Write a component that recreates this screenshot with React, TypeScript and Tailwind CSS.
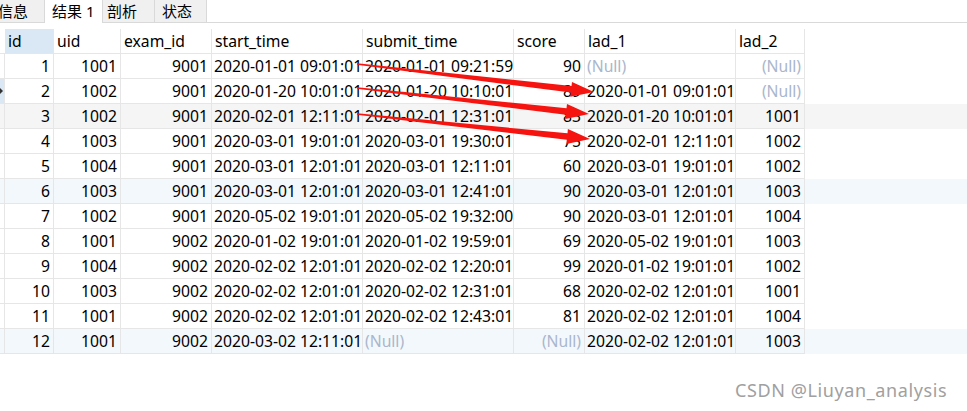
import React from "react";

const cols = [
  { name: "id", w: "w-[49px]" },
  { name: "uid", w: "w-[67px]" },
  { name: "exam_id", w: "w-[91px]" },
  { name: "start_time", w: "w-[151px]" },
  { name: "submit_time", w: "w-[151px]" },
  { name: "score", w: "w-[71px]" },
  { name: "lad_1", w: "w-[151px]" },
  { name: "lad_2", w: "w-[69px]" },
];

const raw: (string | null)[][] = [
  ["1", "1001", "9001", "2020-01-01 09:01:01", "2020-01-01 09:21:59", "90", null, null],
  ["2", "1002", "9001", "2020-01-20 10:01:01", "2020-01-20 10:10:01", "89", "2020-01-01 09:01:01", null],
  ["3", "1002", "9001", "2020-02-01 12:11:01", "2020-02-01 12:31:01", "83", "2020-01-20 10:01:01", "1001"],
  ["4", "1003", "9001", "2020-03-01 19:01:01", "2020-03-01 19:30:01", "75", "2020-02-01 12:11:01", "1002"],
  ["5", "1004", "9001", "2020-03-01 12:01:01", "2020-03-01 12:11:01", "60", "2020-03-01 19:01:01", "1002"],
  ["6", "1003", "9001", "2020-03-01 12:01:01", "2020-03-01 12:41:01", "90", "2020-03-01 12:01:01", "1003"],
  ["7", "1002", "9001", "2020-05-02 19:01:01", "2020-05-02 19:32:00", "90", "2020-03-01 12:01:01", "1004"],
  ["8", "1001", "9002", "2020-01-02 19:01:01", "2020-01-02 19:59:01", "69", "2020-05-02 19:01:01", "1003"],
  ["9", "1004", "9002", "2020-02-02 12:01:01", "2020-02-02 12:20:01", "99", "2020-01-02 19:01:01", "1002"],
  ["10", "1003", "9002", "2020-02-02 12:01:01", "2020-02-02 12:31:01", "68", "2020-02-02 12:01:01", "1001"],
  ["11", "1001", "9002", "2020-02-02 12:01:01", "2020-02-02 12:43:01", "81", "2020-02-02 12:01:01", "1004"],
  ["12", "1001", "9002", "2020-03-02 12:11:01", null, null, "2020-02-02 12:01:01", "1003"],
];

const numericCols = [0, 1, 2, 5, 7];

function rowBg(i: number) {
  if (i === 2) return "bg-[#f5f5f5]";
  if (i === 5 || i === 11) return "bg-[#f3f8fd]";
  return "bg-white";
}

function arrowPoints(sx: number, sy: number, tx: number, ty: number) {
  const dx = tx - sx;
  const dy = ty - sy;
  const len = Math.hypot(dx, dy);
  const ux = dx / len;
  const uy = dy / len;
  const nx = -uy;
  const ny = ux;
  const hl = 23;
  const hw = 7.5;
  const bx = tx - ux * hl;
  const by = ty - uy * hl;
  const w0 = 0.7;
  const w1 = 3.3;
  const pts = [
    [sx + nx * w0, sy + ny * w0],
    [bx + nx * w1, by + ny * w1],
    [bx + nx * hw, by + ny * hw],
    [tx, ty],
    [bx - nx * hw, by - ny * hw],
    [bx - nx * w1, by - ny * w1],
    [sx - nx * w0, sy - ny * w0],
  ];
  return pts.map((p) => `${p[0].toFixed(1)},${p[1].toFixed(1)}`).join(" ");
}

export default function App() {
  return (
    <div className="relative w-[967px] h-[411px] bg-white overflow-hidden font-['Noto_Sans','Noto_Sans_CJK_SC',sans-serif] text-black">
      {/* tabs */}
      <div className="flex h-[23px] text-[15px] leading-[22px]">
        <div className="w-[45px] bg-[#f0f0f0] border-b border-r border-[#d9d9d9] overflow-hidden whitespace-nowrap">
          <span className="ml-[-2px]">信息</span>
        </div>
        <div className="w-[58px] bg-white border-r border-[#d9d9d9] pl-[7px] whitespace-nowrap">结果 1</div>
        <div className="w-[52px] bg-[#f0f0f0] border-b border-r border-[#d9d9d9] pl-[4px]">剖析</div>
        <div className="w-[52px] bg-[#f0f0f0] border-b border-r border-[#d9d9d9] pl-[7px]">状态</div>
        <div className="flex-1 border-b border-[#d9d9d9]" />
      </div>
      <div className="h-[6px]" />
      {/* table */}
      <div className="flex flex-col text-[15.7px] leading-[24px]">
        <div className="flex h-[25px]">
          <div className="w-[5px] border-b border-[#e6e6e6]" />
          {cols.map((c, i) => (
            <div
              key={c.name}
              className={`${c.w} h-[25px] border-r border-b border-[#e6e6e6] pl-[3px] overflow-hidden whitespace-nowrap ${
                i === 0 ? "bg-[#dae8f6]" : "bg-white"
              }`}
            >
              {c.name}
            </div>
          ))}
        </div>
        {raw.map((r, ri) => (
          <div key={ri} className={`flex h-[25px] ${rowBg(ri)}`}>
            <div className={`relative w-[5px] border-r border-b border-[#e6e6e6] ${ri === 1 ? "bg-[#dae8f6]" : ""}`}>
              {ri === 1 && (
                <div className="absolute left-0 top-[9px] w-0 h-0 border-y-[3px] border-y-transparent border-l-[3px] border-l-[#333]" />
              )}
            </div>
            {r.map((v, ci) => {
              const num = numericCols.includes(ci);
              const nul = v === null;
              return (
                <div
                  key={ci}
                  className={`${cols[ci].w} h-[25px] border-r border-b border-[#e6e6e6] overflow-hidden whitespace-nowrap ${
                    num ? "text-right pr-[3px]" : "pl-[2px]"
                  } ${nul ? "text-[#aab6cc]" : ""}`}
                >
                  {nul ? "(Null)" : v}
                </div>
              );
            })}
          </div>
        ))}
      </div>
      {/* arrows */}
      <svg className="absolute left-0 top-0" width={967} height={411}>
        <polygon points={arrowPoints(357, 64, 594, 92)} fill="#f5140f" />
        <polygon points={arrowPoints(357, 88, 589, 114)} fill="#f5140f" />
        <polygon points={arrowPoints(357, 114, 590, 139)} fill="#f5140f" />
      </svg>
      {/* watermark */}
      <div className="absolute left-[735px] top-[378px] text-[18px] leading-[24px] tracking-[0.6px] text-[#a0a0a0] font-['Noto_Sans',sans-serif] whitespace-nowrap">
        CSDN @Liuyan_analysis
      </div>
    </div>
  );
}
